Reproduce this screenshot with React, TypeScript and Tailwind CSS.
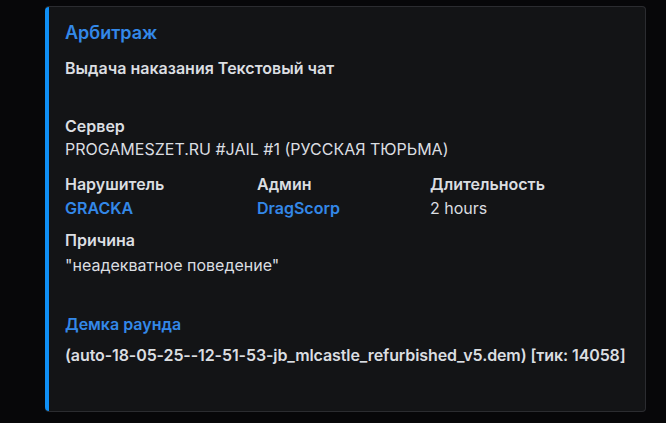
export default function App() {
  return (
    <div className="min-h-[423px] w-full bg-[#070709] pt-[6px] pl-[45px] font-['Inter',sans-serif] text-[16px] text-[#dbdee1]">
      <div className="flex w-[601px] rounded-[4px] border border-l-0 border-[#2b2c30] bg-[#131416]">
        <div className="w-[4px] shrink-0 rounded-l-[4px] bg-[#0f8ff5]" />
        <div className="flex-1 pt-[15px] pb-[46px] pl-[16px] pr-[12px]">
          <div className="text-[18px] leading-[22px] font-semibold text-[#3388e8]">Арбитраж</div>
          <div className="mt-[14px] leading-[20px] font-semibold">Выдача наказания Текстовый чат</div>

          <div className="mt-[38px]">
            <div className="leading-[20px] font-semibold">Сервер</div>
            <div className="mt-[3px] leading-[20px]">PROGAMESZET.RU #JAIL #1 (РУССКАЯ ТЮРЬМА)</div>
          </div>

          <div className="mt-[15px] grid grid-cols-[192px_173px_1fr]">
            <div>
              <div className="leading-[20px] font-semibold">Нарушитель</div>
              <div className="mt-[4px] leading-[20px] font-semibold text-[#3388e8]">GRACKA</div>
            </div>
            <div>
              <div className="leading-[20px] font-semibold">Админ</div>
              <div className="mt-[4px] leading-[20px] font-semibold text-[#3388e8]">DragScorp</div>
            </div>
            <div>
              <div className="leading-[20px] font-semibold">Длительность</div>
              <div className="mt-[4px] leading-[20px]">2 hours</div>
            </div>
          </div>

          <div className="mt-[12px]">
            <div className="leading-[20px] font-semibold">Причина</div>
            <div className="mt-[5px] leading-[20px]">"неадекватное поведение"</div>
          </div>

          <div className="mt-[39px] leading-[20px] font-semibold text-[#3388e8]">Демка раунда</div>
          <div className="mt-[11px] leading-[20px] font-semibold tracking-[-0.1px] whitespace-nowrap">
            (auto-18-05-25--12-51-53-jb_mlcastle_refurbished_v5.dem) [тик: 14058]
          </div>
        </div>
      </div>
    </div>
  );
}
